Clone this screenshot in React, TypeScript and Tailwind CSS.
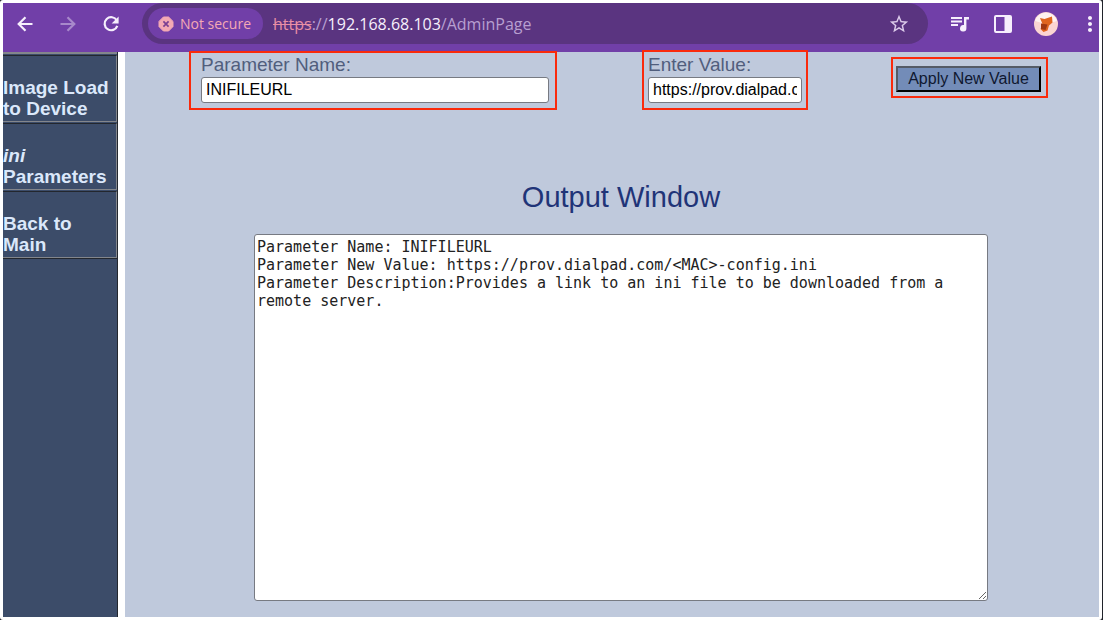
import { MdMoreVert, MdStarBorder } from 'react-icons/md';

const OUTPUT = `Parameter Name: INIFILEURL
Parameter New Value: https://prov.dialpad.com/<MAC>-config.ini
Parameter Description:Provides a link to an ini file to be downloaded from a remote server.`;

function ArrowIcon({ className = '' }) {
    return (
        <svg viewBox="0 0 22 22" className={`w-[22px] h-[22px] ${className}`} fill="none" stroke="currentColor" strokeWidth="2.2" aria-hidden="true">
            <path d="M18.500 11H5M11.500 4.200L4.700 11l6.800 6.800" />
        </svg>
    );
}

function ReloadIcon() {
    return (
        <svg viewBox="0 0 22 22" className="w-[22px] h-[22px]" aria-hidden="true">
            <path d="M16.800 7.500A6.500 6.500 0 1 0 17.300 12.800" fill="none" stroke="currentColor" strokeWidth="2.200" />
            <path d="M18.600 3.500v7h-7z" fill="currentColor" />
        </svg>
    );
}

function QueueIcon() {
    return (
        <svg viewBox="0 0 20 20" className="w-5 h-5" aria-hidden="true">
            <path d="M1 4h11M1 7.500h11M1 11h7" stroke="currentColor" strokeWidth="1.900" />
            <path d="M14 3h5v2.400h-2.600v8.800a3.200 3.200 0 1 1-2.400-3.100z" fill="currentColor" />
        </svg>
    );
}

function WarningIcon() {
    return (
        <svg viewBox="0 0 16 16" className="w-4 h-4 shrink-0" aria-hidden="true">
            <path d="M5.4 1h5.2L15 5.4v5.2L10.6 15H5.4L1 10.6V5.4z" fill="#f4a9b4" stroke="#f4a9b4" strokeLinejoin="round" />
            <path d="M5.4 5.4l5.2 5.2M10.6 5.4l-5.2 5.2" stroke="#7a3f92" strokeWidth="1.7" />
        </svg>
    );
}

function SidePanelIcon() {
    return (
        <svg viewBox="0 0 18 18" className="w-[18px] h-[18px]" aria-hidden="true">
            <rect x="1" y="1" width="16" height="16" rx="1" fill="none" stroke="#f6effc" strokeWidth="2" />
            <path d="M10.500 1H17v16h-6.500z" fill="#f6effc" />
        </svg>
    );
}

function Avatar() {
    return (
        <svg viewBox="0 0 24 24" className="w-6 h-6" aria-hidden="true">
            <circle cx="12" cy="12" r="12" fill="#fbd5d2" />
            <path d="M1 9a11.500 11.500 0 0 1 22 0L12 12z" fill="#fff3f0" />
            <path d="M6 6l4.500 1L18 4.500l.5 6-3.500 3-1.500 5-4 1.500-3-3 2-5z" fill="#e0651f" />
            <path d="M7 11.500l6.500 1-2 5.500-4.500-1z" fill="#a03812" />
        </svg>
    );
}

function Toolbar() {
    return (
        <header className="flex items-center h-[49px] pl-[11px] bg-[#713fa8] text-[#f6effc] font-['Open_Sans',sans-serif] shrink-0">
            <div className="flex items-center gap-[21px] pb-2 shrink-0">
                <button aria-label="Back"><ArrowIcon /></button>
                <button aria-label="Forward" className="text-[#a889cb]"><ArrowIcon className="rotate-180" /></button>
                <button aria-label="Reload"><ReloadIcon /></button>
            </div>

            <div className="flex flex-1 items-center h-[41px] mb-2 ml-5 pl-1.5 pr-[18px] rounded-full bg-[#5a3480]">
                <button className="flex items-center gap-1.5 h-[31px] pl-2.5 pr-3 rounded-full bg-[#713fa8] text-[#f4a9b4] text-sm font-medium whitespace-nowrap">
                    <WarningIcon />
                    Not secure
                </button>
                <p className="flex-1 ml-2.5 text-base leading-5 text-[#b79fd0]">
                    <span className="text-[#e88fa5] line-through">https</span>://<span className="text-[#f6effc]">192.168.68.103</span>/AdminPage
                </p>
                <button aria-label="Bookmark this page" className="text-[#dccbea]"><MdStarBorder size={22} /></button>
            </div>

            <div className="flex items-center pb-2 pl-[22px] shrink-0">
                <button aria-label="Media controls"><QueueIcon /></button>
                <button aria-label="Side panel" className="ml-6"><SidePanelIcon /></button>
                <button aria-label="Profile" className="ml-[22px]"><Avatar /></button>
                <button aria-label="Menu" className="w-[31px] ml-2.5 pl-2.5 overflow-hidden"><MdMoreVert size={24} /></button>
            </div>
        </header>
    );
}

function Sidebar() {
    const cell = 'block h-[67px] pt-[21px] border border-l-0 border-[#83868c] border-t-[#23272e] text-[#dbe8fb]';
    return (
        <nav className="w-[115px] shrink-0 bg-[#3c4c69] border-r border-[#23272e] font-bold text-[19px] leading-[21px] whitespace-nowrap">
            <div className="pt-px space-y-px border-t-2 border-[#83868c]">
                <a href="#load" className={cell}>Image Load<br />to Device</a>
                <a href="#ini" className={cell}><em>ini</em><br />Parameters</a>
                <a href="#main" className={cell}>Back to<br />Main</a>
            </div>
            <hr className="border-[#23272e]" />
        </nav>
    );
}

export default function App() {
    const label = 'block text-[19px] leading-6 text-[#515e7d] whitespace-nowrap';
    const field = 'block w-full min-w-0 h-[26px] px-1 rounded-[3px] border border-[#777a82] bg-white text-base leading-5 text-black';
    return (
        <div className="min-h-screen flex bg-[#20232b] pr-px">
            <div className="flex flex-1 min-w-0 flex-col p-[3px] rounded-[3px] bg-white font-['Liberation_Sans',Arial,sans-serif]">
                <Toolbar />

                <div className="flex flex-1">
                    <Sidebar />

                    <main className="flex flex-1 flex-col min-w-0 ml-[7px] bg-[#bfc9dc]">
                        <div className="grid grid-cols-[64fr_368fr_85fr_166fr_83fr_157fr_51fr] items-start">
                            <div className="col-start-2 -mt-px h-[59px] pl-2.5 pr-1.5 border-2 border-[#fa2a0c]">
                                <label htmlFor="param" className={label}>Parameter Name:</label>
                                <input id="param" className={field} defaultValue="INIFILEURL" />
                            </div>
                            <div className="col-start-4 -mt-0.5 h-[60px] px-1 pt-px border-2 border-[#fa2a0c]">
                                <label htmlFor="value" className={label}>Enter Value:</label>
                                <input id="value" className={field} defaultValue="https://prov.dialpad.com/<MAC>-config.ini" />
                            </div>
                            <div className="col-start-6 mt-[5px] pl-[3px] pr-[5px] pt-[7px] pb-1 border-2 border-[#fa2a0c]">
                                <button className="block w-full h-[26px] border-2 border-t-[#555b66] border-l-[#555b66] border-b-black border-r-black bg-[#738cb8] text-base leading-5 text-[#0f1830] whitespace-nowrap">
                                    Apply New Value
                                </button>
                            </div>
                        </div>

                        <div className="flex flex-1 flex-col mt-[69px] pl-[129px] pr-[111px] pb-4">
                            <label htmlFor="output" className="mb-[19px] text-center text-[29px] leading-9 text-[#1f3478]">Output Window</label>
                            <textarea
                                id="output"
                                className="flex-1 w-full px-0.5 py-[3px] rounded-[3px] border border-[#777a82] bg-white font-['DejaVu_Sans_Mono',monospace] text-[15px] leading-[18px] text-[#222] resize"
                                defaultValue={OUTPUT}
                            />
                        </div>
                    </main>
                </div>
            </div>
        </div>
    );
}
